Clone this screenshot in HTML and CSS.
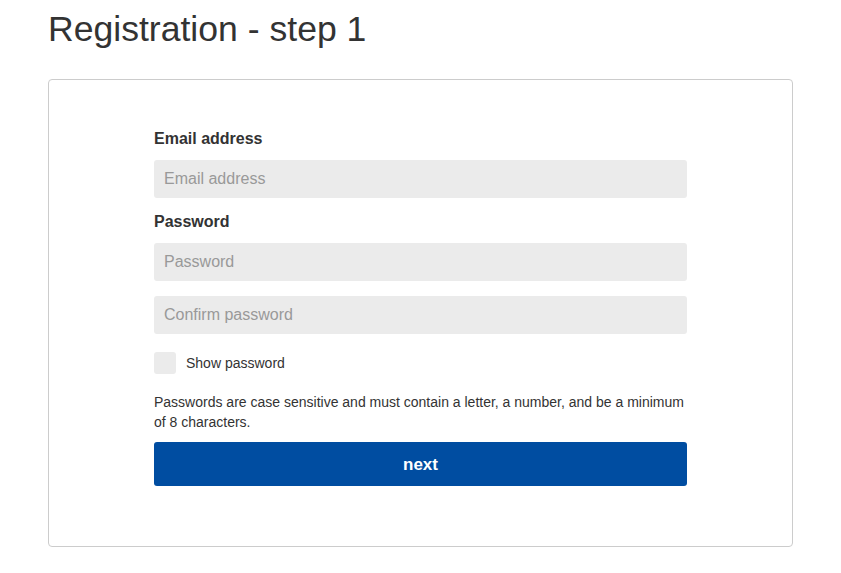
FILE: index.html
```html
<!DOCTYPE html>
<html lang="en">
<head>
    <meta charset="UTF-8">
    <title>Registration - step 1</title>
    <link rel="stylesheet" href="styles.css">
</head>
<body>
<div class="page">
    <h1 class="title">Registration - step 1</h1>
    <div class="card">
        <form class="form">
            <label class="label" for="email">Email address</label>
            <input class="field" id="email" type="email" placeholder="Email address">

            <label class="label label-pw" for="pw">Password</label>
            <input class="field" id="pw" type="password" placeholder="Password">
            <input class="field field-confirm" type="password" placeholder="Confirm password">

            <label class="check">
                <span class="box"></span>
                <span>Show password</span>
            </label>

            <p class="help">Passwords are case sensitive and must contain a letter, a number, and be a minimum of 8 characters.</p>

            <button class="next" type="button">next</button>
        </form>
    </div>
</div>
</body>
</html>
```

FILE: styles.css
```css
*{margin: 0;padding: 0;box-sizing: border-box;}
body {
    font-family: "Liberation Sans", Arial, sans-serif;
    color: #333;
    background: #fff;
}
.page {
    width: 745px;
    margin-left: 48px;
}
.title {
    font-size: 35.6px;
    font-weight: normal;
    line-height: 40px;
    padding-top: 9px;
    margin-bottom: 30px;
}
/*========card========*/
.card {
    border: 1px solid #ccc;
    border-radius: 4px;
    padding: 48px 105px 60px;
    height: 468px;
}
.form {
    display: flex;
    flex-direction: column;
}
.label {
    font-size: 16px;
    font-weight: bold;
    line-height: 22px;
    margin-bottom: 10px;
}
.label-pw {
    margin-top: 13px;
}
.field {
    height: 38px;
    border: none;
    border-radius: 3px;
    background: #ebebeb;
    padding: 0 10px;
    font-family: inherit;
    font-size: 16px;
    color: #333;
}
.field::placeholder {
    color: #999;
}
.field-confirm {
    margin-top: 15px;
}
.check {
    display: flex;
    align-items: center;
    gap: 10px;
    margin-top: 18px;
    font-size: 14px;
    color: #333;
}
.box {
    width: 22px;
    height: 22px;
    border-radius: 3px;
    background: #ebebeb;
}
.help {
    margin-top: 18px;
    font-size: 14px;
    line-height: 20px;
}
.next {
    margin-top: 10px;
    height: 44px;
    padding-top: 2px;
    border: none;
    border-radius: 3px;
    background: #004da1;
    color: #fff;
    font-family: inherit;
    font-size: 17px;
    font-weight: bold;
}
```
